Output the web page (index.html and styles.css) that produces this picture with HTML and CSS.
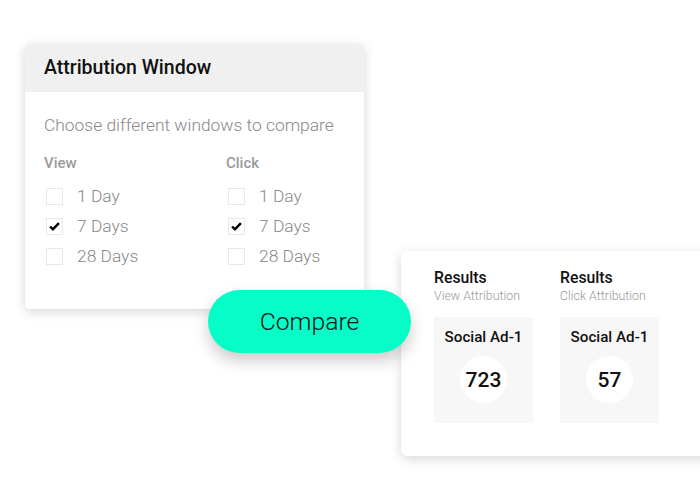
FILE: index.html
```html
<!DOCTYPE html>
<html lang="en">
<head>
	<meta charset="UTF-8">
	<meta name="viewport" content="width=device-width, initial-scale=1.0">
	<title>Attribution Window</title>
	<link rel="stylesheet" href="styles.css">
</head>
<body>
	<div class="canvas">
		<div class="window-card">
			<div class="window-header">Attribution Window</div>
			<div class="window-body">
				<p class="hint">Choose different windows to compare</p>
				<div class="columns">
					<div class="column">
						<h4>View</h4>
						<label class="option"><span class="box"></span>1 Day</label>
						<label class="option"><span class="box"><svg viewBox="0 0 17 17"><path d="M3.5 8.5l3.2 3.2 6.8-7" /></svg></span>7 Days</label>
						<label class="option"><span class="box"></span>28 Days</label>
					</div>
					<div class="column">
						<h4>Click</h4>
						<label class="option"><span class="box"></span>1 Day</label>
						<label class="option"><span class="box"><svg viewBox="0 0 17 17"><path d="M3.5 8.5l3.2 3.2 6.8-7" /></svg></span>7 Days</label>
						<label class="option"><span class="box"></span>28 Days</label>
					</div>
				</div>
			</div>
		</div>

		<div class="results-card">
			<div class="result">
				<h4>Results</h4>
				<p class="sub">View Attribution</p>
				<div class="ad-box">
					<span class="ad-name">Social Ad-1</span>
					<span class="count">723</span>
				</div>
			</div>
			<div class="result">
				<h4>Results</h4>
				<p class="sub">Click Attribution</p>
				<div class="ad-box">
					<span class="ad-name">Social Ad-1</span>
					<span class="count">57</span>
				</div>
			</div>
		</div>

		<button class="compare-btn">Compare</button>
	</div>
</body>
</html>
```

FILE: styles.css
```css
body {
	margin: 0;
	font-family: Roboto, "Liberation Sans", sans-serif;
	background: #fff;
	overflow: hidden;
}
.canvas {
	position: relative;
	width: 700px;
	height: 500px;
}
.window-card {
	position: absolute;
	left: 25px;
	top: 44px;
	width: 339px;
	height: 265px;
	background: #fff;
	border-radius: 5px;
	box-shadow: 0 3px 12px rgba(0, 0, 0, 0.16);
	overflow: hidden;
}
.window-header {
	height: 48px;
	background: #f0f0f0;
	padding-left: 19px;
	line-height: 47px;
	font-size: 19.5px;
	font-weight: 500;
	color: #111;
}
.window-body {
	padding: 0 19px;
}
.hint {
	margin: 23px 0 0;
	font-size: 17.4px;
	font-weight: 300;
	color: #888;
	line-height: 20px;
}
.columns {
	display: grid;
	grid-template-columns: 182px 1fr; /* View / Click */
	margin-top: 19px;
}
.column h4 {
	margin: 0 0 9px;
	font-size: 15px;
	font-weight: 500;
	color: #9a9a9a;
	line-height: 18px;
}
.option {
	display: flex;
	align-items: center;
	gap: 14px;
	height: 30px;
	padding-left: 2px;
	font-size: 17.4px;
	font-weight: 300;
	color: #888;
}
.box {
	width: 17px;
	height: 17px;
	box-sizing: border-box;
	border: 1px solid #e8e8e8;
	display: flex;
}
.box svg {
	width: 15px;
	height: 15px;
	fill: none;
	stroke: #000;
	stroke-width: 2.8;
}
.results-card {
	position: absolute;
	left: 401px;
	top: 251px;
	width: 330px;
	height: 205px;
	box-sizing: border-box;
	padding: 18px 0 0 33px;
	background: #fff;
	border-radius: 6px;
	box-shadow: 0 3px 12px rgba(0, 0, 0, 0.16);
	display: flex;
	gap: 27px;
}
.result h4 {
	margin: 0;
	font-size: 15.8px;
	font-weight: 500;
	color: #111;
	line-height: 18px;
}
.sub {
	margin: 2px 0 0;
	font-size: 12.4px;
	font-weight: 300;
	color: #999;
	line-height: 14px;
}
.ad-box {
	margin-top: 14px;
	width: 99px;
	height: 106px;
	background: #f7f7f7;
	display: flex;
	flex-direction: column;
	align-items: center;
}
.ad-name {
	margin-top: 11px;
	font-size: 15.2px;
	font-weight: 500;
	color: #111;
	line-height: 18px;
}
.count {
	margin-top: 10px;
	width: 47px;
	height: 47px;
	border-radius: 50%;
	background: #fff;
	display: flex;
	align-items: center;
	justify-content: center;
	font-size: 21px;
	font-weight: 500;
	color: #111;
}
.compare-btn {
	position: absolute;
	left: 208px;
	top: 290px;
	width: 203px;
	height: 63px;
	border: none;
	border-radius: 32px;
	background: #06fdc7;
	box-shadow: 0 8px 16px rgba(0, 0, 0, 0.2);
	font-family: Roboto, "Liberation Sans", sans-serif;
	font-size: 24.7px;
	font-weight: 300;
	color: #111;
	padding: 0;
}
```
